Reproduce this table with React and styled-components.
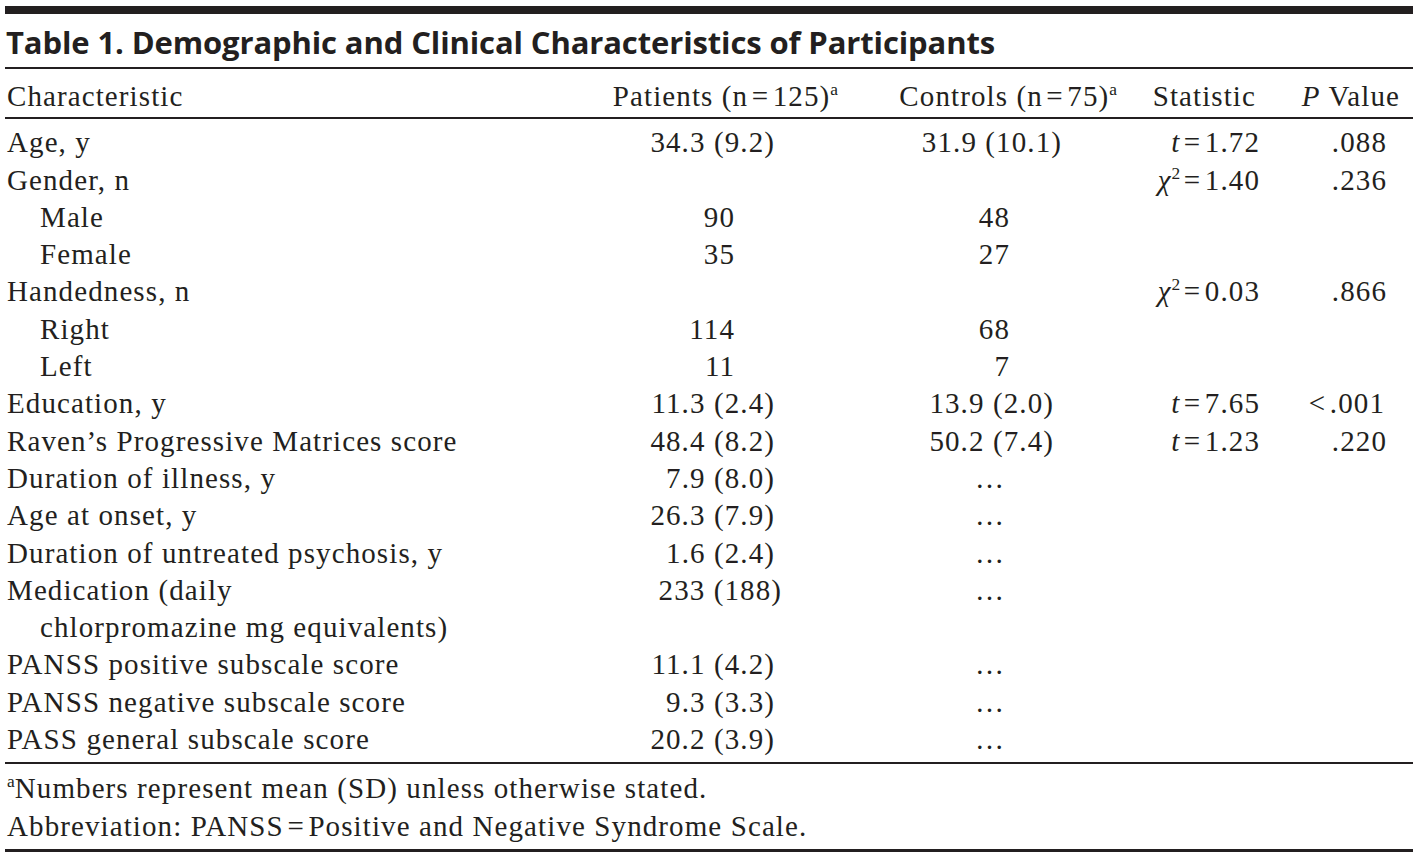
import React from "react";
import styled, { createGlobalStyle, css } from "styled-components";

const GlobalStyle = createGlobalStyle`
  body {
    margin: 0;
    background: #fff;
  }
`;

const INK = "#231f20";

const Page = styled.div`
  padding: 6px 0 0 5px;
  color: ${INK};
  font-family: "Liberation Serif", "Times New Roman", serif;
`;

const Rule = styled.div`
  height: ${(p) => p.$h}px;
  background: ${INK};
`;

const Title = styled.h1`
  margin: 0;
  padding: 3px 0 0 1px;
  font-family: "Open Sans", "Liberation Sans", sans-serif;
  font-weight: 700;
  font-size: 31px;
  line-height: 50px;
  letter-spacing: -0.12px;
  white-space: nowrap;
`;

const columns = css`
  display: grid;
  grid-template-columns: 585px 255px 275px 150px 143px;
`;

const HeadRow = styled.div`
  ${columns};
  padding: 9px 0 2px;
`;

const Body = styled.div`
  ${columns};
  padding: 5px 0 4px;
`;

const Cell = styled.div`
  font-size: 29px;
  line-height: 37.3px;
  letter-spacing: 1.1px;
  white-space: nowrap;
  text-align: ${(p) => (p.$left ? "left" : "right")};
  padding-left: ${(p) => p.$indent || 0}px;
  padding-right: ${(p) => p.$pad || 0}px;
`;

const LabelCell = styled(Cell)`
  white-space: normal;
  padding-left: ${(p) => (p.$sub ? 35 : 2)}px;
  text-indent: ${(p) => (p.$hang ? -33 : 0)}px;
`;

const Sup = styled.sup`
  font-size: 0.6em;
  line-height: 0;
  vertical-align: 0.62em;
  letter-spacing: 0;
`;

const I = styled.i`
  font-style: italic;
`;

const Footnotes = styled.div`
  padding: 6px 0 4px 2px;
  font-size: 29px;
  line-height: 37.3px;
  letter-spacing: 1.1px;
`;

const H = "\u200A";

const stat = (sym, val) =>
  sym === "t" ? (
    <>
      <I>t</I>
      {H}={H}
      {val}
    </>
  ) : (
    <>
      <I>χ</I>
      <Sup>2</Sup>
      {H}={H}
      {val}
    </>
  );

const DOTS = "…";

// [label, patients, patientsPad, controls, controlsPad, statistic, pValue, pPad, sub, hang]
const rows = [
  ["Age, y", "34.3 (9.2)", 70, "31.9 (10.1)", 58, stat("t", "1.72"), ".088", 26],
  ["Gender, n", "", 0, "", 0, stat("x", "1.40"), ".236", 26],
  ["Male", "90", 110, "48", 110, null, "", 0, true],
  ["Female", "35", 110, "27", 110, null, "", 0, true],
  ["Handedness, n", "", 0, "", 0, stat("x", "0.03"), ".866", 26],
  ["Right", "114", 110, "68", 110, null, "", 0, true],
  ["Left", "11", 110, "7", 110, null, "", 0, true],
  ["Education, y", "11.3 (2.4)", 70, "13.9 (2.0)", 66, stat("t", "7.65"), `<${H}.001`, 28],
  ["Raven’s Progressive Matrices score", "48.4 (8.2)", 70, "50.2 (7.4)", 66, stat("t", "1.23"), ".220", 26],
  ["Duration of illness, y", "7.9 (8.0)", 70, DOTS, 115],
  ["Age at onset, y", "26.3 (7.9)", 70, DOTS, 115],
  ["Duration of untreated psychosis, y", "1.6 (2.4)", 70, DOTS, 115],
  [
    <>
      Medication (daily
      <br />
      chlorpromazine mg equivalents)
    </>,
    "233 (188)",
    63,
    DOTS,
    115,
    null,
    "",
    0,
    false,
    true,
  ],
  ["PANSS positive subscale score", "11.1 (4.2)", 70, DOTS, 115],
  ["PANSS negative subscale score", "9.3 (3.3)", 70, DOTS, 115],
  ["PASS general subscale score", "20.2 (3.9)", 70, DOTS, 115],
];

export default function App() {
  return (
    <Page>
      <GlobalStyle />
      <Rule $h={8} />
      <Title>Table 1. Demographic and Clinical Characteristics of Participants</Title>
      <Rule $h={2} />
      <HeadRow>
        <LabelCell $left>Characteristic</LabelCell>
        <Cell $pad={7}>
          Patients (n{H}={H}125)<Sup>a</Sup>
        </Cell>
        <Cell $pad={3}>
          Controls (n{H}={H}75)<Sup>a</Sup>
        </Cell>
        <Cell $pad={14}>Statistic</Cell>
        <Cell $pad={13}>
          <I>P</I> Value
        </Cell>
      </HeadRow>
      <Rule $h={2} />
      <Body>
        {rows.map(([label, p, pp, c, cp, s, pv, pvp, sub, hang], i) => (
          <React.Fragment key={i}>
            <LabelCell $left $sub={sub || hang} $hang={hang}>
              {label}
            </LabelCell>
            <Cell $pad={pp}>{p}</Cell>
            <Cell $pad={cp}>{c}</Cell>
            <Cell $pad={10}>{s}</Cell>
            <Cell $pad={pvp}>{pv}</Cell>
          </React.Fragment>
        ))}
      </Body>
      <Rule $h={2} />
      <Footnotes>
        <Sup>a</Sup>Numbers represent mean (SD) unless otherwise stated.
        <br />
        Abbreviation: PANSS{H}={H}Positive and Negative Syndrome Scale.
      </Footnotes>
      <Rule $h={3} />
    </Page>
  );
}
